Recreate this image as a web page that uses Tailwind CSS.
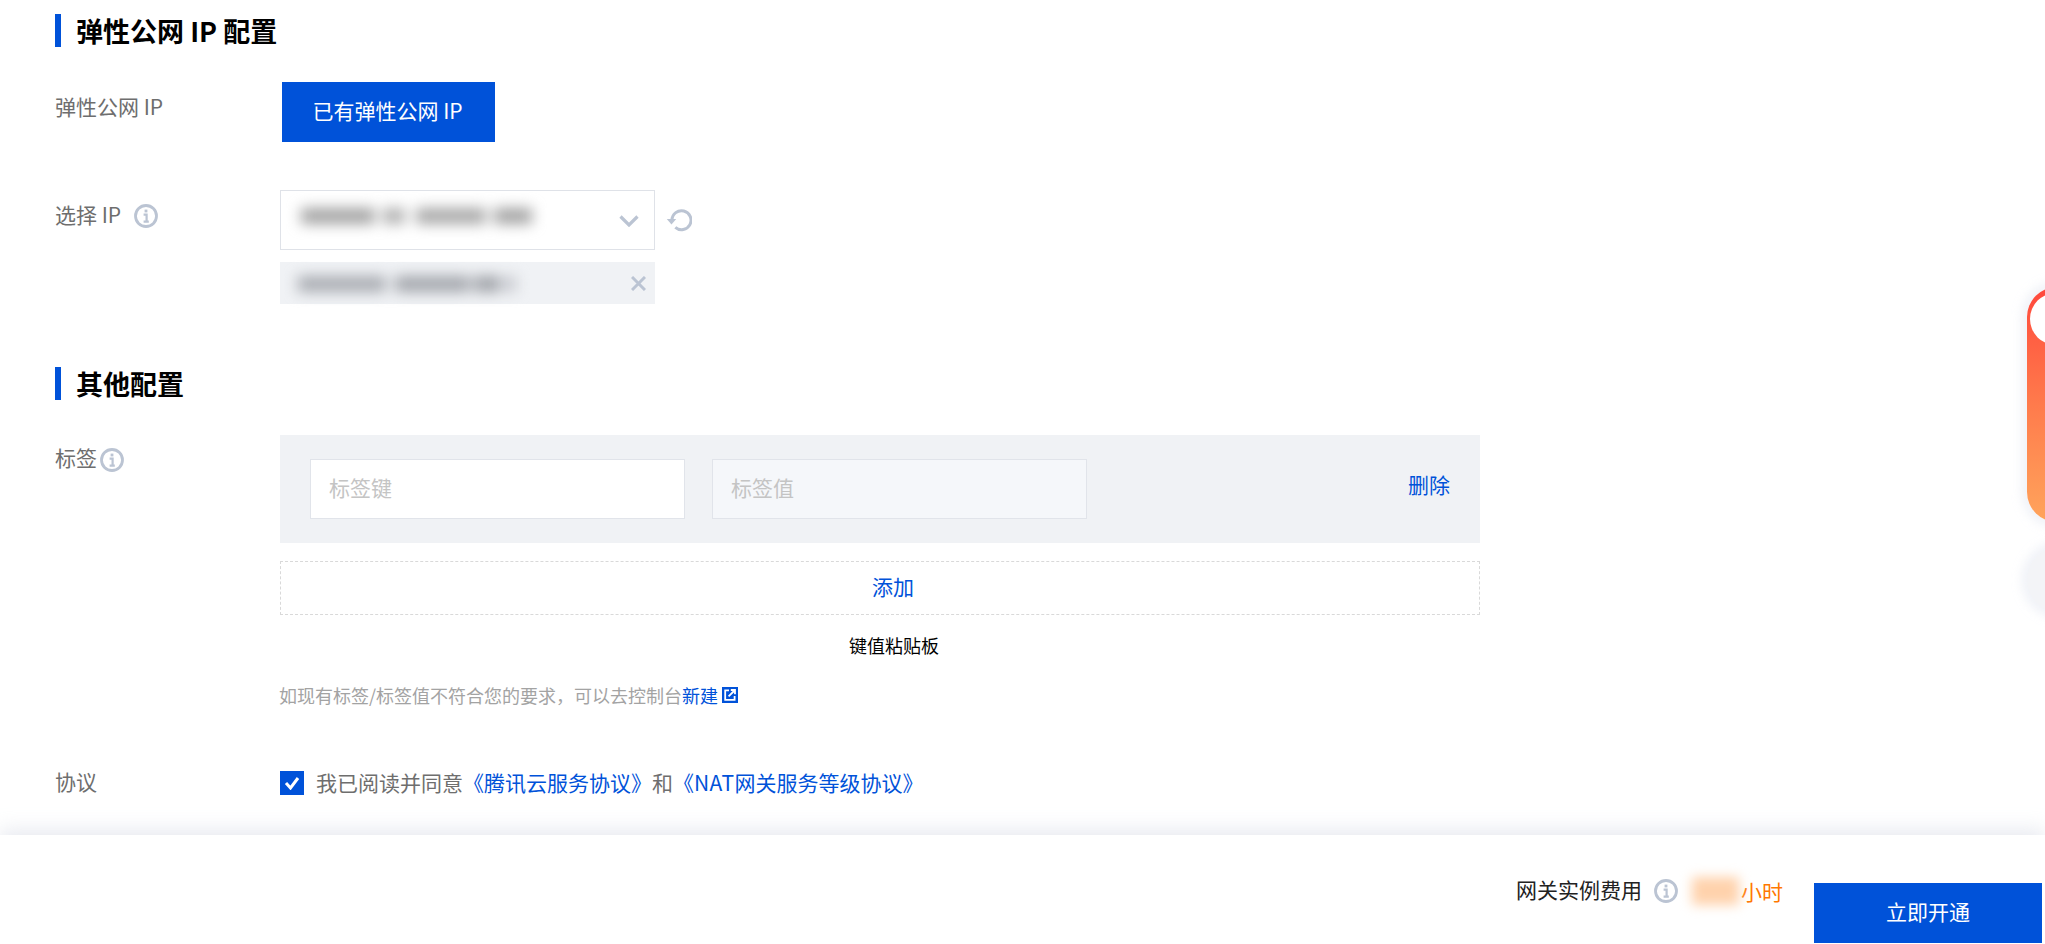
<!DOCTYPE html>
<html lang="zh-CN">
<head>
    <meta charset="UTF-8">
    <meta name="viewport" content="width=device-width, initial-scale=1.0">
    <title>NAT 网关</title>
    <script src="https://cdn.jsdelivr.net/npm/@tailwindcss/browser@4"></script>
</head>
<body class="bg-white font-['Noto_Sans_CJK_SC',sans-serif] text-[21px] text-[#6e6e6e]">
<div class="relative flex h-[944px] flex-col overflow-hidden">

    <main class="flex-1 pl-[55px]">
        <!-- 弹性公网 IP -->
        <h2 class="mt-[14px] h-[33px] border-l-[6px] border-[#0052d9] pl-[15px] text-[27px] leading-[33px] font-bold text-black">弹性公网 IP 配置</h2>

        <div class="mt-[35px] flex">
            <label class="w-[225px] pt-[9px] leading-[30px]">弹性公网 IP</label>
            <button type="button" class="ml-[2px] h-[60px] w-[213px] bg-[#0052d9] pr-[2px] pb-[2px] text-[21px] text-white">已有弹性公网 IP</button>
        </div>

        <div class="mt-[48px] flex">
            <label class="flex h-[39px] w-[225px] items-end leading-[30px]">
                <span>选择 IP</span>
                <svg class="mb-[1px] ml-[13px]" width="24" height="24" viewBox="0 0 24 24" fill="none"><circle cx="12" cy="12" r="10.5" stroke="#bbc4d3" stroke-width="2.8"/><rect x="10.6" y="5.6" width="2.8" height="2.8" fill="#bbc4d3"/><path d="M9.6 10.6h3v6.6M9.6 17.6h5.2" stroke="#bbc4d3" stroke-width="2.2"/></svg>
            </label>
            <div>
                <div class="flex items-center">
                    <div class="relative h-[60px] w-[375px] border border-[#dfe2e8] bg-white">
                        <div class="absolute top-[17px] left-[20px] flex h-[16px] gap-[8px] blur-[7px]">
                            <div class="w-[74px] bg-[#a3a3a3]"></div>
                            <div class="w-[22px] bg-[#b0b0b0]"></div>
                            <div class="ml-[3px] w-[70px] bg-[#a8a8a8]"></div>
                            <div class="w-[38px] bg-[#a3a3a3]"></div>
                        </div>
                        <svg class="absolute top-[24px] right-[15px]" width="20" height="12" viewBox="0 0 20 12" fill="none"><path d="M1.5 1.5l8.5 8.5 8.5-8.5" stroke="#bbc4d3" stroke-width="3.2"/></svg>
                    </div>
                    <svg class="ml-[11px]" width="26" height="24" viewBox="0 0 26 24" fill="none"><path d="M6 12A9.5 9.5 0 1 1 9.3 19.4" stroke="#bbc4d3" stroke-width="3"/><path d="M0.8 11h9.4l-4.7 5.6z" fill="#bbc4d3"/></svg>
                </div>
                <div class="relative mt-[12px] h-[42px] w-[375px] bg-[#f0f2f5]">
                    <div class="absolute top-[14px] left-[18px] flex h-[16px] gap-[9px] blur-[7px]">
                        <div class="w-[88px] bg-[#a9acb2]"></div>
                        <div class="w-[75px] bg-[#a3a6ac]"></div>
                        <div class="-ml-[5px] w-[26px] bg-[#9fa2a8]"></div>
                        <div class="-ml-[5px] w-[12px] bg-[#c4c6cc]"></div>
                    </div>
                    <svg class="absolute top-[14px] right-[9px]" width="15" height="15" viewBox="0 0 15 15" fill="none"><path d="M1 1l13 13M14 1L1 14" stroke="#bbc4d3" stroke-width="3"/></svg>
                </div>
            </div>
        </div>

        <!-- 其他配置 -->
        <h2 class="mt-[63px] h-[33px] border-l-[6px] border-[#0052d9] pl-[15px] text-[27px] leading-[33px] font-bold text-black">其他配置</h2>

        <div class="mt-[35px] flex">
            <label class="flex h-[37px] w-[225px] items-end leading-[30px]">
                <span>标签</span>
                <svg class="ml-[3px]" width="24" height="24" viewBox="0 0 24 24" fill="none"><circle cx="12" cy="12" r="10.5" stroke="#bbc4d3" stroke-width="2.8"/><rect x="10.6" y="5.6" width="2.8" height="2.8" fill="#bbc4d3"/><path d="M9.6 10.6h3v6.6M9.6 17.6h5.2" stroke="#bbc4d3" stroke-width="2.2"/></svg>
            </label>
            <div class="w-[1200px]">
                <div class="flex h-[108px] items-start gap-[27px] bg-[#f0f2f5] pt-[24px] pl-[30px]">
                    <div class="flex h-[60px] w-[375px] items-center border border-[#e1e4ea] bg-white pb-[2px] pl-[18px] text-[#c4c4c4]">标签键</div>
                    <div class="flex h-[60px] w-[375px] items-center border border-[#e1e4ea] bg-[#f5f7fa] pb-[2px] pl-[18px] text-[#c4c4c4]">标签值</div>
                    <a class="mt-[10px] ml-auto pr-[30px] leading-[30px] text-[#0052d9]">删除</a>
                </div>
                <div class="mt-[18px] flex h-[54px] items-center justify-center border border-dashed border-[#d9d9d9] pb-[2px] pl-[26px] text-[#0052d9]">添加</div>
                <div class="mt-[18px] ml-[569px] text-[18px] leading-[24px] text-black">键值粘贴板</div>
                <div class="mt-[26px] -ml-[1px] flex items-center text-[18px] leading-[24px] text-[#a3a3a3]">
                    <span>如现有标签/标签值不符合您的要求，可以去控制台</span><a class="text-[#0052d9]">新建</a>
                    <svg class="ml-[4px]" width="16" height="16" viewBox="0 0 16 16" fill="none"><rect width="16" height="16" fill="#0052d9"/><path d="M7 3.4H3.2v9.4h9.4V9" stroke="white" stroke-width="1.8"/><path d="M6.6 9.4L12 4M8.8 3h4.2v4.2" stroke="white" stroke-width="1.8"/></svg>
                </div>
            </div>
        </div>

        <!-- 协议 -->
        <div class="mt-[60px] flex">
            <label class="w-[225px] leading-[28px]">协议</label>
            <div class="flex items-center leading-[30px]">
                <span class="flex h-[24px] w-[24px] items-center justify-center bg-[#0052d9]">
                    <svg width="16" height="14" viewBox="0 0 16 14" fill="none"><path d="M2 7l4.5 5L14 2" stroke="white" stroke-width="3"/></svg>
                </span>
                <span class="ml-[12px] pb-[2px]">我已阅读并同意<a class="text-[#0052d9]">《腾讯云服务协议》</a>和<a class="text-[#0052d9]">《<span class="tracking-[0.4px]">NAT</span>网关服务等级协议》</a></span>
            </div>
        </div>
    </main>

    <!-- 底部费用栏 -->
    <footer class="z-10 flex h-[109px] justify-end bg-white shadow-[0_-6px_18px_rgba(225,228,236,0.75)]">
        <span class="mt-[39px] leading-[30px] text-[#222]">网关实例费用</span>
        <svg class="mt-[44px] ml-[12px]" width="24" height="24" viewBox="0 0 24 24" fill="none"><circle cx="12" cy="12" r="10.5" stroke="#bbc4d3" stroke-width="2.8"/><rect x="10.6" y="5.6" width="2.8" height="2.8" fill="#bbc4d3"/><path d="M9.6 10.6h3v6.6M9.6 17.6h5.2" stroke="#bbc4d3" stroke-width="2.2"/></svg>
        <div class="mt-[42px] ml-[14px] h-[28px] w-[47px] bg-[#ffd2ac] blur-[6px]"></div>
        <span class="mt-[41px] ml-[2px] leading-[30px] text-[#ff7800]">小时</span>
        <button type="button" class="mt-[48px] mr-[3px] ml-[31px] h-[60px] w-[228px] bg-[#0052d9] pb-[2px] text-[21px] text-white">立即开通</button>
    </footer>

    <!-- 右侧悬浮挂件 -->
    <div class="absolute top-[287px] left-[2027px] h-[235px] w-[60px] rounded-l-[30px] bg-gradient-to-b from-[#ff463c] to-[#ffa45c] shadow-[0_0_10px_6px_rgba(235,238,245,0.7)]">
        <div class="absolute top-[6px] left-[3px] h-[52px] w-[52px] rounded-full bg-white"></div>
    </div>
    <div class="absolute top-[547px] left-[2027px] h-[66px] w-[66px] rounded-full bg-[#f3f4f7] shadow-[0_0_10px_6px_rgba(235,238,245,0.7)]"></div>
</div>
</body>
</html>
